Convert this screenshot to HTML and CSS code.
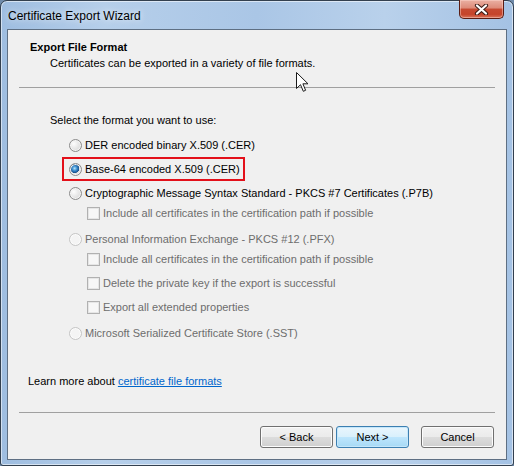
FILE: index.html
```html
<!DOCTYPE html>
<html lang="en">
<head>
  <meta charset="UTF-8">
  <title>Certificate Export Wizard</title>
  <link rel="stylesheet" href="styles.css">
</head>
<body>
  <div class="window">
    <div class="titlebar">
      <span class="title">Certificate Export Wizard</span>
      <button class="close-btn" aria-label="Close">
        <svg width="17" height="11" viewBox="0 0 17 11">
          <path d="M4 1.5 L13 9.5 M13 1.5 L4 9.5" stroke="#3c1d18" stroke-width="4.2" stroke-linecap="round"/>
          <path d="M4 1.5 L13 9.5 M13 1.5 L4 9.5" stroke="#ffffff" stroke-width="2.2" stroke-linecap="round"/>
        </svg>
      </button>
    </div>

    <div class="client">
      <div class="header">
        <h1>Export File Format</h1>
        <p>Certificates can be exported in a variety of file formats.</p>
      </div>

      <div class="separator"></div>

      <div class="content">
        <p class="prompt">Select the format you want to use:</p>

        <div class="option">
          <label class="choice"><span class="radio"></span>DER encoded binary X.509 (.CER)</label>
        </div>
        <div class="option">
          <label class="choice highlight"><span class="radio checked"></span>Base-64 encoded X.509 (.CER)</label>
        </div>
        <div class="option">
          <label class="choice"><span class="radio"></span>Cryptographic Message Syntax Standard - PKCS #7 Certificates (.P7B)</label>
        </div>
        <div class="sub-options">
          <div class="option"><label class="choice disabled"><span class="checkbox"></span>Include all certificates in the certification path if possible</label></div>
        </div>
        <div class="option">
          <label class="choice disabled"><span class="radio"></span>Personal Information Exchange - PKCS #12 (.PFX)</label>
        </div>
        <div class="sub-options">
          <div class="option"><label class="choice disabled"><span class="checkbox"></span>Include all certificates in the certification path if possible</label></div>
          <div class="option"><label class="choice disabled"><span class="checkbox"></span>Delete the private key if the export is successful</label></div>
          <div class="option"><label class="choice disabled"><span class="checkbox"></span>Export all extended properties</label></div>
        </div>
        <div class="option">
          <label class="choice disabled"><span class="radio"></span>Microsoft Serialized Certificate Store (.SST)</label>
        </div>
      </div>

      <p class="learn-more">Learn more about <a href="#">certificate file formats</a></p>

      <div class="separator bottom"></div>

      <div class="buttons">
        <button class="btn">&lt; Back</button>
        <button class="btn default">Next &gt;</button>
        <button class="btn cancel">Cancel</button>
      </div>
    </div>

    <svg class="cursor" width="13" height="21" viewBox="0 0 13 21">
      <path d="M0.5 0.5 L0.5 16.5 L4.5 12.7 L7.3 19.3 L9.6 18.3 L6.9 11.8 L12 11.8 Z" fill="#fff" stroke="#1a1a1a" stroke-width="1" stroke-linejoin="miter"/>
    </svg>
  </div>
</body>
</html>
```

FILE: styles.css
```css
* {
  margin: 0;
  padding: 0;
  box-sizing: border-box;
}

body {
  background: #6f8bab;
  font-family: 'Liberation Sans', Arial, sans-serif;
  font-size: 11px;
  color: #000;
}

.window {
  position: relative;
  width: 514px;
  height: 466px;
  display: flex;
  flex-direction: column;
  padding: 0 6px 5px;
  border: 1px solid #33404f;
  border-radius: 7px 7px 3px 3px;
  background: linear-gradient(90deg, #9ebde0 0%, #b6cfea 20%, #aac6e6 50%, #b9d1eb 75%, #a4c2e4 100%);
  box-shadow: inset 0 0 0 1px rgba(255, 255, 255, 0.55);
}

.titlebar {
  height: 28px;
  display: flex;
  align-items: flex-start;
  justify-content: space-between;
}

.title {
  margin-top: 7px;
  margin-left: 1px;
  font-size: 12px;
  line-height: 16px;
  color: #000;
  text-shadow: 0 0 6px rgba(255, 255, 255, 0.9);
}

.close-btn {
  width: 45px;
  height: 19px;
  margin-top: -1px;
  margin-right: 3px;
  display: flex;
  align-items: center;
  justify-content: center;
  border: 1px solid #5a1d14;
  border-top: none;
  border-radius: 0 0 5px 5px;
  background: linear-gradient(#eab0a3 0%, #dd8a78 45%, #c64a32 50%, #c5442b 80%, #d9745c 100%);
  box-shadow: inset 0 0 0 1px rgba(255, 220, 210, 0.45);
}

.client {
  flex: 1;
  display: flex;
  flex-direction: column;
  background: #f0f0f0;
  border: 1px solid #5e6f83;
  padding-bottom: 11px;
}

.header {
  padding: 9px 0 0 22px;
}

.header h1 {
  font-size: 11px;
  font-weight: 700;
  line-height: 16px;
}

.header p {
  padding-left: 20px;
  line-height: 16px;
}

.separator {
  height: 1px;
  margin: 16px 11px 0;
  background: #a0a0a0;
}

.separator.bottom {
  margin-top: 23px;
}

.content {
  padding-left: 42px;
}

.prompt {
  margin-top: 24px;
  line-height: 16px;
  margin-bottom: 5px;
}

.option {
  height: 24px;
  display: flex;
  align-items: center;
  padding-left: 19px;
}

.sub-options {
  margin-top: -4px;
  margin-bottom: 2px;
}

.sub-options .option {
  padding-left: 37px;
}

.choice {
  height: 24px;
  display: inline-flex;
  align-items: center;
  gap: 3px;
  white-space: nowrap;
}

.choice.highlight {
  margin-left: -7px;
  padding: 0 3px 0 5px;
  border: 2px solid #e3101a;
}

.choice.disabled {
  color: #6d6d6d;
}

.radio {
  width: 13px;
  height: 13px;
  border-radius: 50%;
  border: 1px solid #8b8b8b;
  background: radial-gradient(circle at 35% 35%, #fdfdfd 0%, #e8e8e8 45%, #cfcfcf 100%);
  box-shadow: inset 0 0 0 1px #f4f4f4;
}

.radio.checked {
  background:
    radial-gradient(circle at 42% 40%, #b9e4fb 0%, #3c8fd0 25%, #174f8c 48%, transparent 52%),
    radial-gradient(circle at 35% 35%, #fdfdfd 0%, #e8e8e8 45%, #cfcfcf 100%);
}

.disabled .radio {
  border-color: #c5c5c5;
  background: #f4f4f4;
  box-shadow: inset 0 0 0 1px #fbfbfb;
}

.checkbox {
  width: 13px;
  height: 13px;
  border: 1px solid #b1b1b1;
  background: #f7f7f7;
  box-shadow: inset 0 0 0 1px #e6e6e6;
}

.learn-more {
  margin-top: auto;
  padding-left: 20px;
  line-height: 16px;
}

.learn-more a {
  color: #0066cc;
  text-decoration: underline;
}

.buttons {
  display: flex;
  justify-content: flex-end;
  gap: 3px;
  margin-top: 13px;
  padding-right: 12px;
}

.btn {
  width: 73px;
  height: 22px;
  font-family: inherit;
  font-size: 11px;
  color: #000;
  border: 1px solid #707070;
  border-radius: 3px;
  background: linear-gradient(#f2f2f2 0%, #ebebeb 49%, #dddddd 50%, #cfcfcf 100%);
  box-shadow: inset 0 0 0 1px #fcfcfc;
}

.btn.default {
  border-color: #3c7fb1;
  background: linear-gradient(#eaf6fd 0%, #d9f0fc 49%, #bee6fd 50%, #a7d9f5 100%);
  box-shadow: inset 0 0 0 1px #c5e7fb;
}

.btn.cancel {
  margin-left: 9px;
}

.cursor {
  position: absolute;
  left: 295px;
  top: 71px;
}
```
